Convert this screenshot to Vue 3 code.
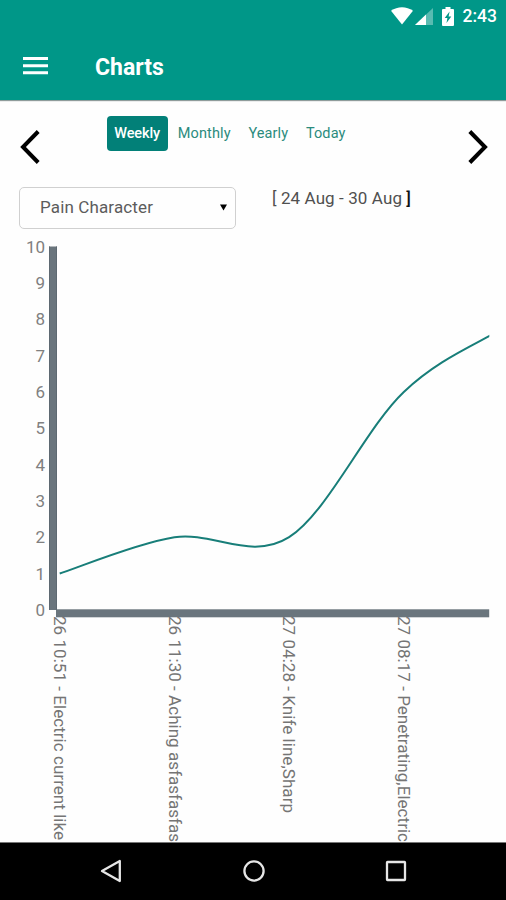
<script setup>
const tabs = ['Weekly', 'Monthly', 'Yearly', 'Today']
const ticks = Array.from({ length: 11 }, (_, i) => i)
const yFor = (v) => 377.8 - v * 36.3
const points = [
  { value: 1, label: '26 10:51 - Electric current like', length: 224 },
  { value: 2, label: '26 11:30 - Aching asfasfasfas', length: 226 },
  { value: 2, label: '27 04:28 - Knife line,Sharp', length: 197 },
  { value: 6, label: '27 08:17 - Penetrating,Electric', length: 226 },
  { value: 8 },
  { value: 10 },
].map((p, i) => ({ ...p, x: 59.7 + i * 114.7, y: yFor(p.value) }))

// Catmull-Rom spline through the data points
let curve = `M${points[0].x} ${points[0].y}`
for (let i = 0; i < points.length - 1; i++) {
  const a = points[i - 1] || points[i]
  const b = points[i]
  const c = points[i + 1]
  const d = points[i + 2] || c
  curve += `C${b.x + (c.x - a.x) / 6} ${b.y + (c.y - a.y) / 6} ${c.x - (d.x - b.x) / 6} ${c.y - (d.y - b.y) / 6} ${c.x} ${c.y}`
}
</script>

<template>
  <div class="screen">
    <header class="top">
      <div class="status">
        <svg class="wifi" width="22" height="18" viewBox="0 0 22 18"><path d="M0 3.8C6.5-.9 15.5-.9 22 3.8L11 17.6Z" /></svg>
        <svg class="signal" width="18" height="17" viewBox="0 0 18 17"><path d="M18 0V17H0Z" opacity=".35" /><path d="M11 6.6V17H0Z" /></svg>
        <svg class="battery" width="12" height="19" viewBox="0 0 12 19"><path d="M1 2H3.5V0H8.5V2H11Q12 2 12 3V18Q12 19 11 19H1Q0 19 0 18V3Q0 2 1 2Z" /><path class="bolt" d="M7.6 4.5 2.7 11H5.4L4.5 16 9.3 9.4H6.6Z" /></svg>
        <span class="clock">2:43</span>
      </div>
      <div class="toolbar">
        <svg width="25" height="18" viewBox="0 0 25 18"><path d="M0 0H25V3H0ZM0 7.2H25V10.2H0ZM0 14.3H25V17.3H0Z" /></svg>
        <h1>Charts</h1>
      </div>
    </header>

    <nav class="period">
      <svg class="arrow" width="20" height="34" viewBox="0 0 20 34"><path d="M18.2 1.5 3 17 18.2 32.5" /></svg>
      <div class="tabs">
        <button v-for="(tab, i) in tabs" :key="tab" class="tab" :class="{ active: i === 0 }">{{ tab }}</button>
      </div>
      <svg class="arrow" width="20" height="34" viewBox="0 0 20 34"><path d="M1.8 1.5 17 17 1.8 32.5" /></svg>
    </nav>

    <div class="filters">
      <div class="select">
        <span>Pain Character</span>
        <svg width="7" height="7" viewBox="0 0 8 7"><path d="M0 0H8L4 7Z" /></svg>
      </div>
      <div class="range">[ 24 Aug - 30 Aug <span class="end">]</span></div>
    </div>

    <svg class="chart" width="506" height="610" viewBox="0 0 506 610">
      <defs><clipPath id="plot"><rect x="50" y="0" width="439.3" height="380" /></clipPath></defs>
      <rect class="axis" x="49" y="14.5" width="8" height="363.5" />
      <rect class="axis" x="56" y="377.3" width="433.2" height="8" />
      <path class="edge" d="M49.5 14.5V378M56.5 14.5V378" />
      <text v-for="t in ticks" :key="t" class="tick" x="45" :y="yFor(t) + 6">{{ t }}</text>
      <path class="line" :d="curve" clip-path="url(#plot)" />
      <g v-for="p in points.slice(0, 4)" :key="p.label" :transform="`translate(${p.x - 5.7} 384) rotate(90)`">
        <text class="label" :textLength="p.length">{{ p.label }}</text>
      </g>
    </svg>

    <footer class="navbar">
      <svg width="22" height="24" viewBox="0 0 22 24"><path d="M2 12 19.8 2V22Z" /></svg>
      <svg width="22" height="24" viewBox="0 0 22 24"><circle cx="11" cy="12" r="9.6" /></svg>
      <svg width="22" height="24" viewBox="0 0 22 24"><rect x="2" y="3" width="18" height="18" rx=".5" /></svg>
    </footer>
  </div>
</template>

<style>
body { margin: 0; background: #fff; }
</style>

<style scoped>
.screen { width: 506px; height: 900px; display: flex; flex-direction: column; overflow: hidden; background: #fefefe; font-family: Roboto, sans-serif; }
.top { box-sizing: border-box; height: 100px; flex: none; background: #009788; box-shadow: 0 1px 1px #8f9c9b; color: #fff; }
.top svg { fill: #fff; }
.status { height: 32px; display: flex; align-items: center; justify-content: flex-end; padding-right: 9px; }
.signal { margin-left: 2px; }
.battery { margin-left: 9px; }
.top .bolt { fill: #009788; }
.clock { margin-left: 9px; font-size: 17.5px; font-weight: 500; line-height: 32px; }
.toolbar { height: 68px; display: flex; align-items: center; padding-left: 22.5px; gap: 47.5px; }
h1 { margin: 3px 0 0; font-size: 23px; font-weight: 700; line-height: 30px; }
.period { height: 87px; flex: none; display: flex; align-items: flex-start; justify-content: space-between; padding: 0 17.5px 0 20px; box-sizing: border-box; }
.arrow { margin-top: 30px; fill: none; stroke: #000; stroke-width: 4; }
.tabs { display: flex; margin: 16px 46px 0 0; }
.tab { box-sizing: border-box; height: 35px; padding: 0 7.5px; margin-right: 2.8px; border: 0; border-radius: 4px; background: none; color: #2b8b7d; font: 400 14.5px/34px Roboto, sans-serif; letter-spacing: .1px; }
.tab.active { background: #028078; color: #fff; font-weight: 500; letter-spacing: -.1px; }
.filters { height: 45px; flex: none; display: flex; padding-left: 19px; }
.select { box-sizing: border-box; width: 217px; height: 42px; display: flex; align-items: center; justify-content: space-between; padding: 0 8px 2px 20px; border: 1.5px solid #d0d0d0; border-radius: 5px; font-size: 17px; color: #5c5c5c; letter-spacing: .13px; }
.range { margin-left: 36px; font-size: 17px; line-height: 22px; color: #505050; letter-spacing: .1px; }
.end { color: #111; font-weight: 500; }
.chart { flex: none; display: block; }
.axis { fill: #6a757d; }
.edge { stroke: #5e6972; stroke-width: 1; fill: none; }
.tick { font-size: 17px; fill: #808080; text-anchor: end; }
.line { fill: none; stroke: #187e79; stroke-width: 2; }
.label { font-size: 17px; fill: #757575; }
.navbar { box-sizing: border-box; height: 58px; flex: none; display: flex; justify-content: center; align-items: center; gap: 120.5px; padding: 0 0 2px 1.5px; background: #000; border-top: 1px solid #777; }
.navbar svg { fill: none; stroke: #e6e6e6; stroke-width: 2.3; stroke-linejoin: round; }
</style>
